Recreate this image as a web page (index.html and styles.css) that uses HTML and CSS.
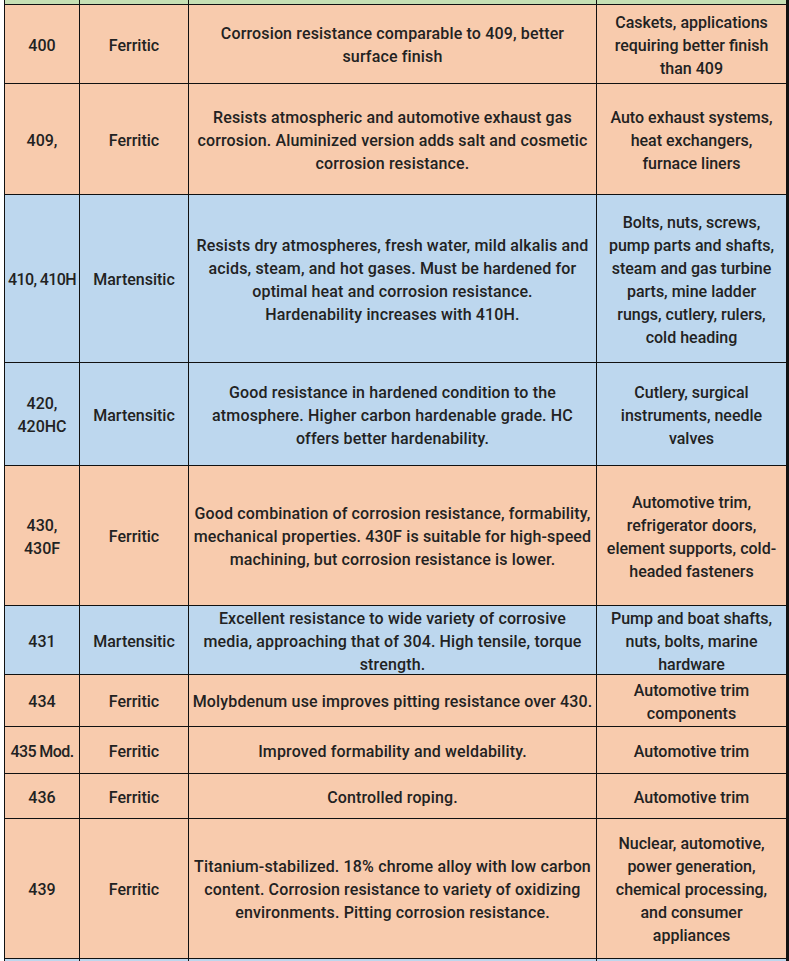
FILE: index.html
```html
<!DOCTYPE html>
<html>
<head>
<meta charset="utf-8">
<link rel="stylesheet" href="styles.css">
</head>
<body>
<div class="sheet">
  <div class="cell head"></div><div class="cell head"></div><div class="cell head"></div><div class="cell head"></div>

  <div class="cell o">400</div>
  <div class="cell o">Ferritic</div>
  <div class="cell o desc">Corrosion resistance comparable to 409, better<br>surface finish</div>
  <div class="cell o">Caskets, applications<br>requiring better finish<br>than 409</div>

  <div class="cell o">409,</div>
  <div class="cell o">Ferritic</div>
  <div class="cell o desc">Resists atmospheric and automotive exhaust gas<br>corrosion. Aluminized version adds salt and cosmetic<br>corrosion resistance.</div>
  <div class="cell o">Auto exhaust systems,<br>heat exchangers,<br>furnace liners</div>

  <div class="cell b tight">410, 410H</div>
  <div class="cell b">Martensitic</div>
  <div class="cell b desc">Resists dry atmospheres, fresh water, mild alkalis and<br>acids, steam, and hot gases. Must be hardened for<br>optimal heat and corrosion resistance.<br>Hardenability increases with 410H.</div>
  <div class="cell b">Bolts, nuts, screws,<br>pump parts and shafts,<br>steam and gas turbine<br>parts, mine ladder<br>rungs, cutlery, rulers,<br>cold heading</div>

  <div class="cell b">420,<br>420HC</div>
  <div class="cell b">Martensitic</div>
  <div class="cell b desc">Good resistance in hardened condition to the<br>atmosphere. Higher carbon hardenable grade. HC<br>offers better hardenability.</div>
  <div class="cell b">Cutlery, surgical<br>instruments, needle<br>valves</div>

  <div class="cell o">430,<br>430F</div>
  <div class="cell o">Ferritic</div>
  <div class="cell o desc">Good combination of corrosion resistance, formability,<br>mechanical properties. 430F is suitable for high-speed<br>machining, but corrosion resistance is lower.</div>
  <div class="cell o">Automotive trim,<br>refrigerator doors,<br>element supports, cold-<br>headed fasteners</div>

  <div class="cell b">431</div>
  <div class="cell b">Martensitic</div>
  <div class="cell b desc">Excellent resistance to wide variety of corrosive<br>media, approaching that of 304. High tensile, torque<br>strength.</div>
  <div class="cell b">Pump and boat shafts,<br>nuts, bolts, marine<br>hardware</div>

  <div class="cell o">434</div>
  <div class="cell o">Ferritic</div>
  <div class="cell o desc">Molybdenum use improves pitting resistance over 430.</div>
  <div class="cell o">Automotive trim<br>components</div>

  <div class="cell o tight">435 Mod.</div>
  <div class="cell o">Ferritic</div>
  <div class="cell o desc">Improved formability and weldability.</div>
  <div class="cell o">Automotive trim</div>

  <div class="cell o">436</div>
  <div class="cell o">Ferritic</div>
  <div class="cell o desc">Controlled roping.</div>
  <div class="cell o">Automotive trim</div>

  <div class="cell o">439</div>
  <div class="cell o">Ferritic</div>
  <div class="cell o desc">Titanium-stabilized. 18% chrome alloy with low carbon<br>content. Corrosion resistance to variety of oxidizing<br>environments. Pitting corrosion resistance.</div>
  <div class="cell o">Nuclear, automotive,<br>power generation,<br>chemical processing,<br>and consumer<br>appliances</div>

  <div class="cell b"></div><div class="cell b"></div><div class="cell b"></div><div class="cell b"></div>
</div>
</body>
</html>
```
FILE: styles.css
```css
html, body {
  margin: 0;
  padding: 0;
  background: #ffffff;
}
.sheet {
  margin-left: 4px;
  width: 783px;
  display: grid;
  grid-template-columns: 74px 108px 407px 189px;
  grid-template-rows: 4px 78px 110px 167px 102px 139px 68px 51px 46px 44px 139px 20px;
  gap: 1px;
  padding: 0 1px;
  background: #111111;
  font-family: Roboto, "Liberation Sans", sans-serif;
  font-size: 16px;
  font-weight: 500;
  line-height: 23px;
  color: #222222;
}
.cell {
  display: flex;
  align-items: center;
  justify-content: center;
  text-align: center;
  white-space: nowrap;
  overflow: visible;
  padding-top: 2px;
  box-sizing: border-box;
}
.desc { letter-spacing: 0.15px; }
.tight { letter-spacing: -0.6px; }
.head { background: #c6e0b4; }
.o { background: #f8cbad; }
.b { background: #bdd7ee; }
```
